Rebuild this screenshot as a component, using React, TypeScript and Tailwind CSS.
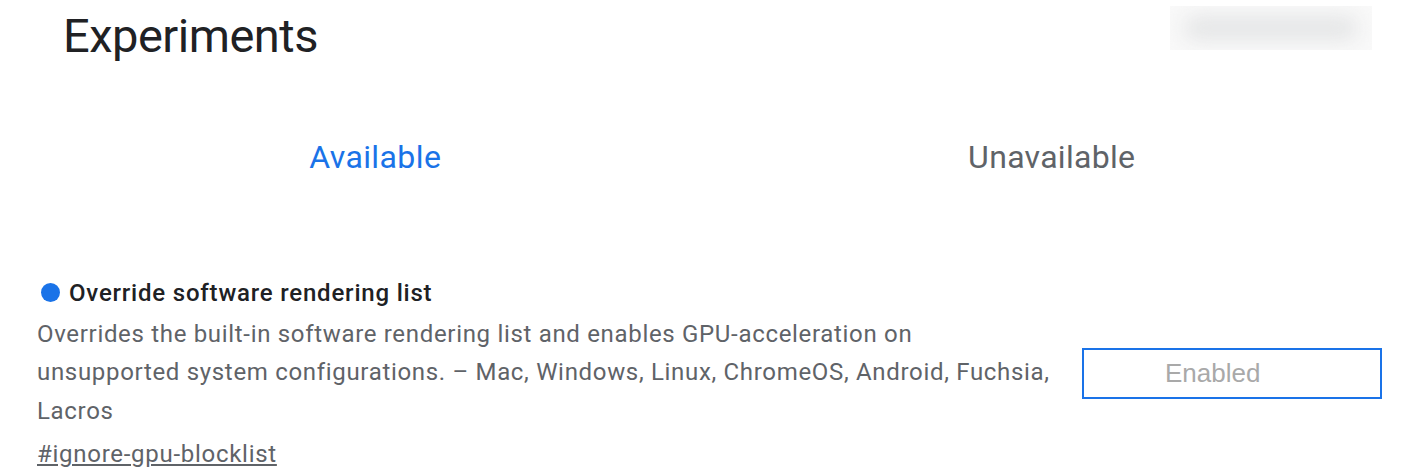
import React from 'react';

const App: React.FC = () => {
    return (
        <div className="w-[1406px] h-[474px] overflow-hidden bg-white font-['Roboto',sans-serif]">
            {/* Header */}
            <div className="flex items-start justify-between pl-[63px] pr-[34px] pt-[8px]">
                <h1 className="text-[47px] leading-[56px] tracking-[-0.5px] font-normal text-[#202124]">Experiments</h1>
                <div className="relative mt-[-2px] w-[202px] h-[44px] overflow-hidden bg-[#f9f9f9]">
                    <div className="absolute left-[14px] top-[10px] w-[174px] h-[24px] rounded-full bg-[#e4e5e6] blur-[10px]"></div>
                </div>
            </div>

            {/* Tabs */}
            <div className="flex mt-[75px] pl-[37px] pr-[16px]">
                <div className="flex-1 text-center text-[32px] leading-[37.5px] tracking-[0.4px] text-[#1a73e8]">Available</div>
                <div className="flex-1 text-center text-[32px] leading-[37.5px] tracking-[0.3px] text-[#5f6368]">Unavailable</div>
            </div>

            {/* Experiment */}
            <div className="flex items-center justify-between mt-[97px] pl-[37px] pr-[24px]">
                <div className="w-[1020px]">
                    <div className="flex items-center gap-[9px] pl-[4px]">
                        <span className="w-[19px] h-[19px] rounded-full bg-[#1a73e8] shrink-0"></span>
                        <h2 className="text-[24px] leading-[38.4px] tracking-[0.8px] font-medium text-[#202124]">Override software rendering list</h2>
                    </div>
                    <p className="mt-[3px] text-[24px] leading-[38.5px] tracking-[0.68px] text-[#5f6368]">
                        Overrides the built-in software rendering list and enables GPU-acceleration on unsupported system configurations. – Mac, Windows, Linux, ChromeOS, Android, Fuchsia, Lacros
                    </p>
                    <a href="#ignore-gpu-blocklist" className="inline-block mt-[5px] text-[24px] leading-[38.5px] tracking-[0.72px] text-[#5f6368] underline">#ignore-gpu-blocklist</a>
                </div>
                <div className="w-[300px] h-[51px] shrink-0 border-2 border-[#1a73e8] flex items-center pl-[81px] font-['Liberation_Sans',sans-serif] text-[26px] text-[#a9a9a9]">
                    Enabled
                </div>
            </div>
        </div>
    );
};

export default App;
